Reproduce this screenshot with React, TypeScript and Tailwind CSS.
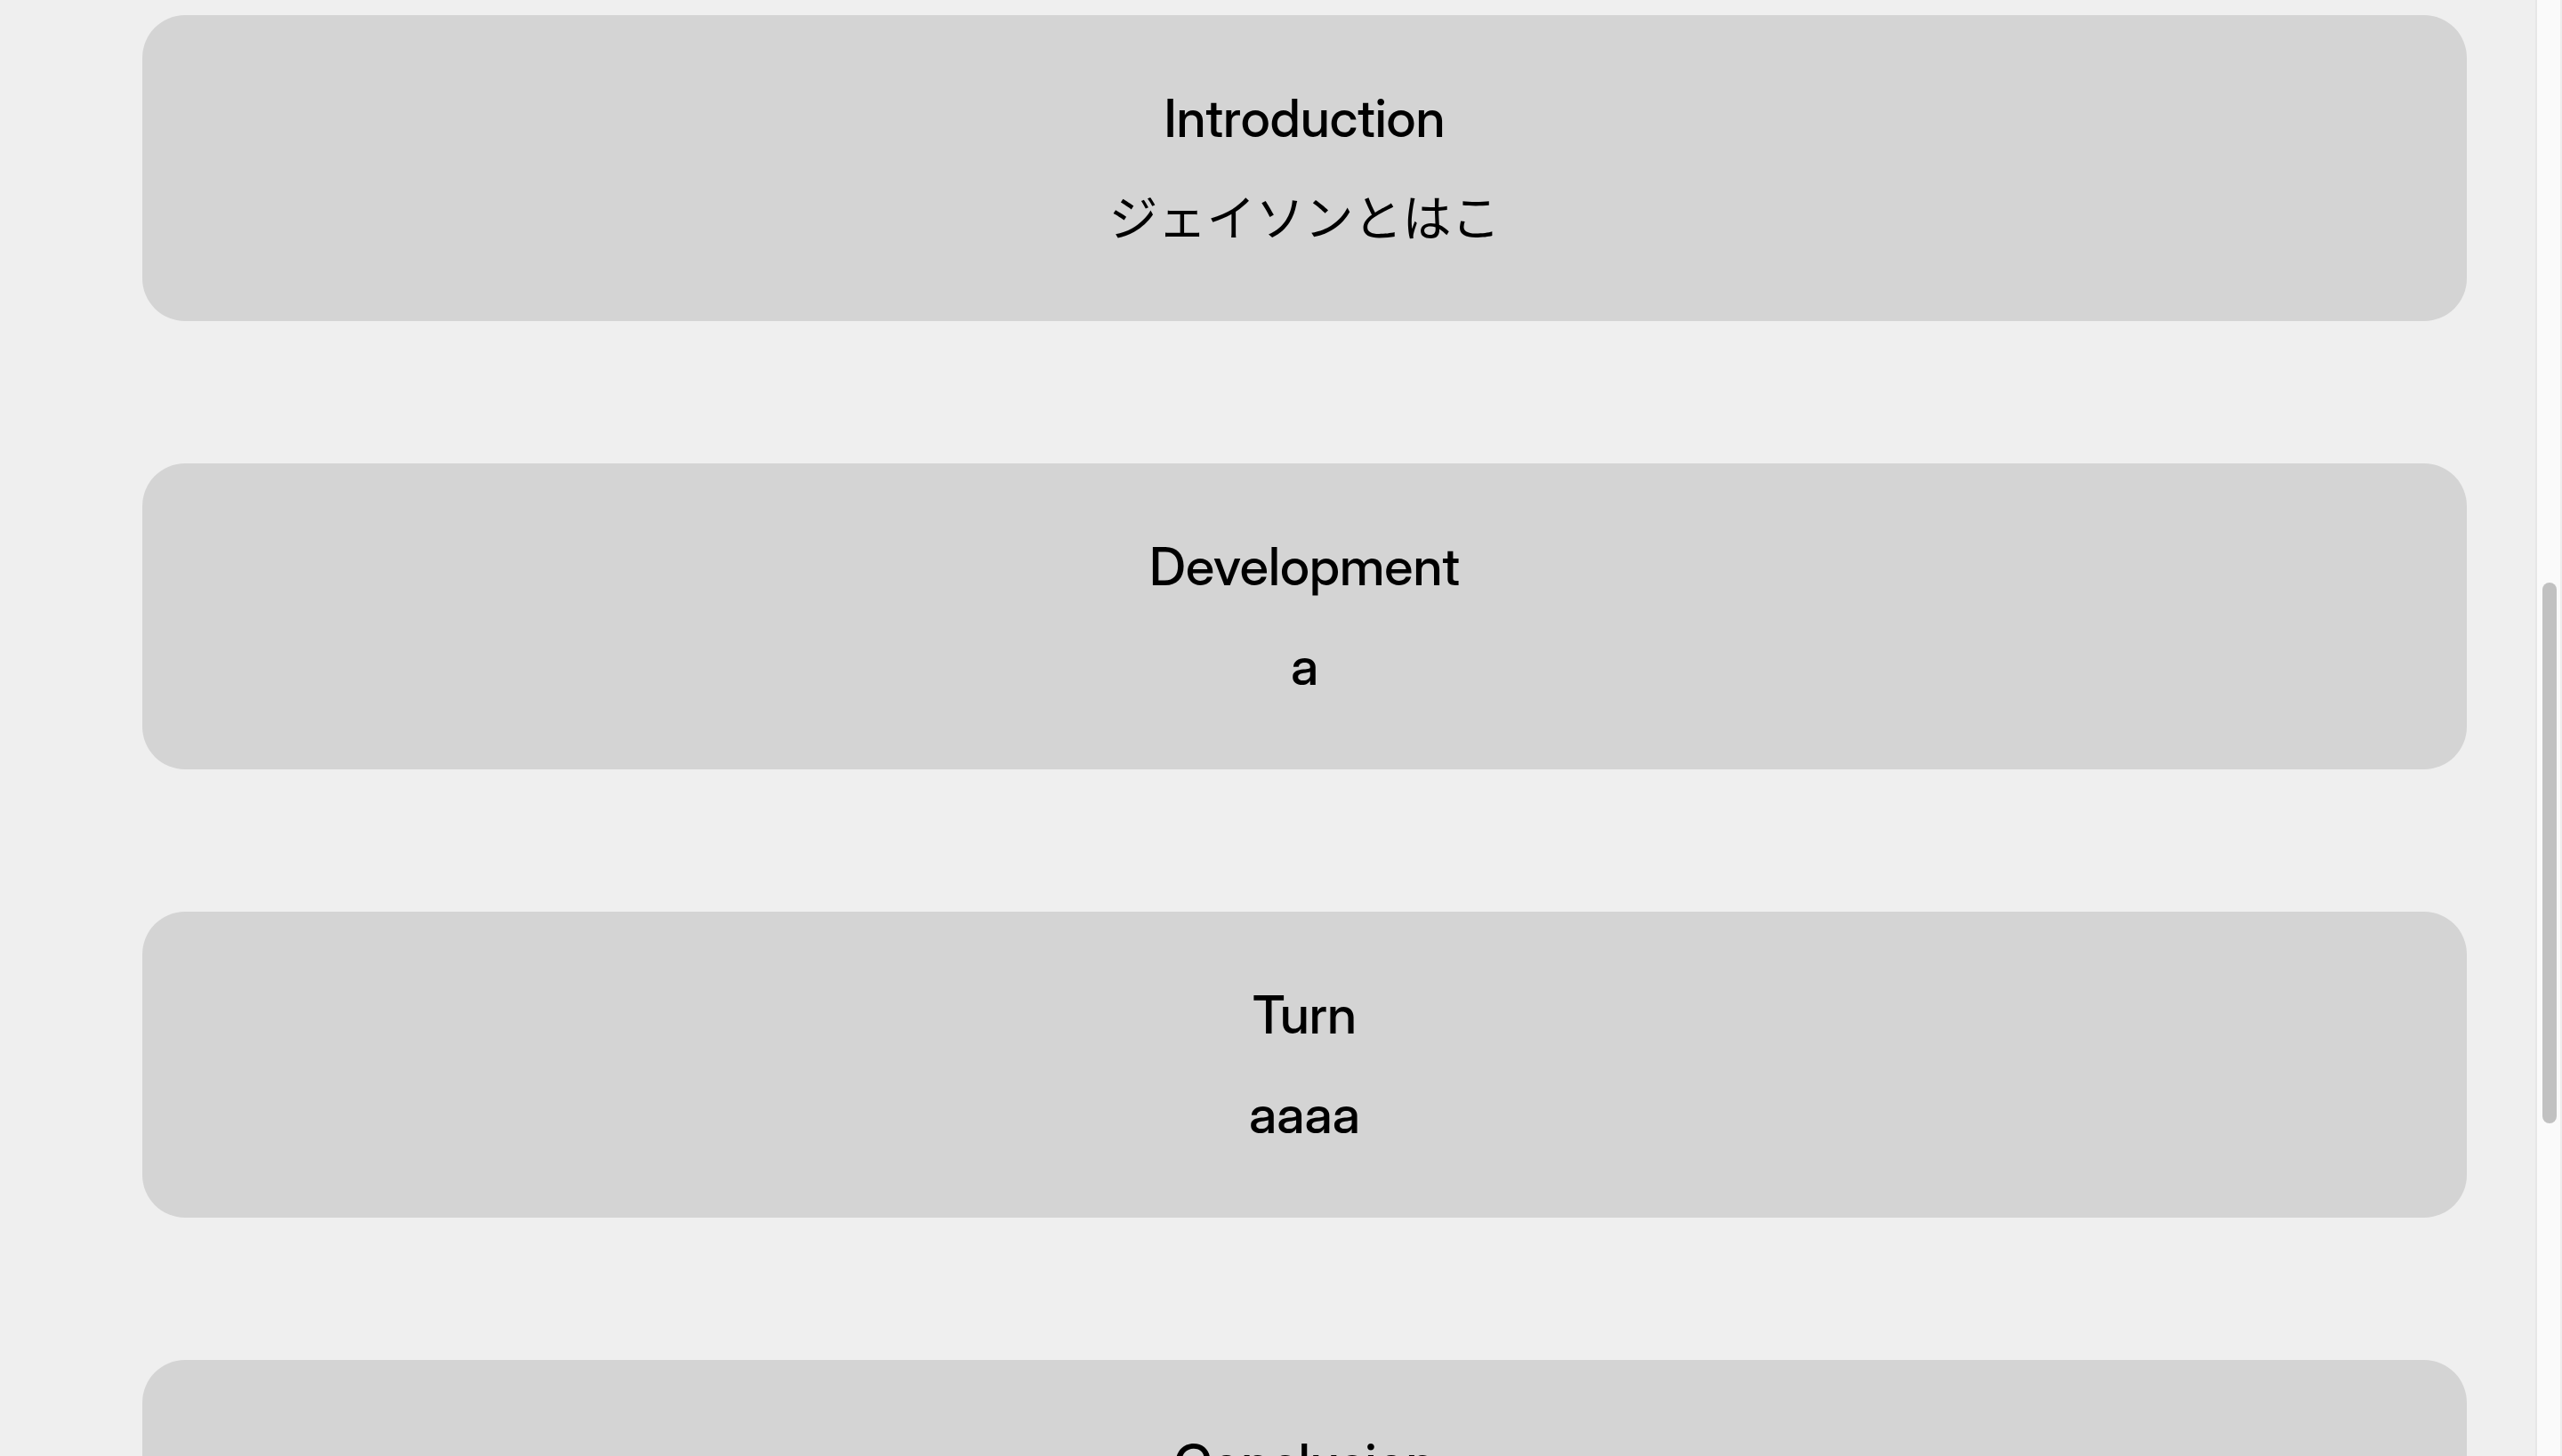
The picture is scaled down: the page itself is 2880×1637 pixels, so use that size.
const sections = [
  { title: "Introduction", body: "ジェイソンとはこ", lang: "ja" },
  { title: "Development", body: "a", lang: "en" },
  { title: "Turn", body: "aaaa", lang: "en" },
  { title: "Conclusion", body: "a", lang: "en" },
];

export default function App() {
  return (
    <div className="flex h-screen overflow-hidden bg-[#efefef] font-['Inter_Display','Inter','Noto_Sans_CJK_JP',sans-serif] text-black">
      <main className="flex min-w-0 flex-1 flex-col gap-40 pt-[17px] pr-[77px] pl-40">
        {sections.map((s) => (
          <section
            key={s.title}
            className="flex shrink-0 flex-col gap-10 rounded-[48px] bg-[#d4d4d4] p-20 text-center text-[59px] leading-[72px] font-medium"
          >
            <h2>{s.title}</h2>
            <p lang={s.lang} className={s.lang === "ja" ? "text-[55px] font-normal" : ""}>
              {s.body}
            </p>
          </section>
        ))}
      </main>
      <div className="w-[30px] border-r-2 border-l-2 border-r-[#eeeeee] border-l-[#e7e7e7] bg-[#fafafa] pt-[655px] pl-1.5">
        <div className="h-[608px] w-4 rounded-full bg-[#c1c1c1]" />
      </div>
    </div>
  );
}
